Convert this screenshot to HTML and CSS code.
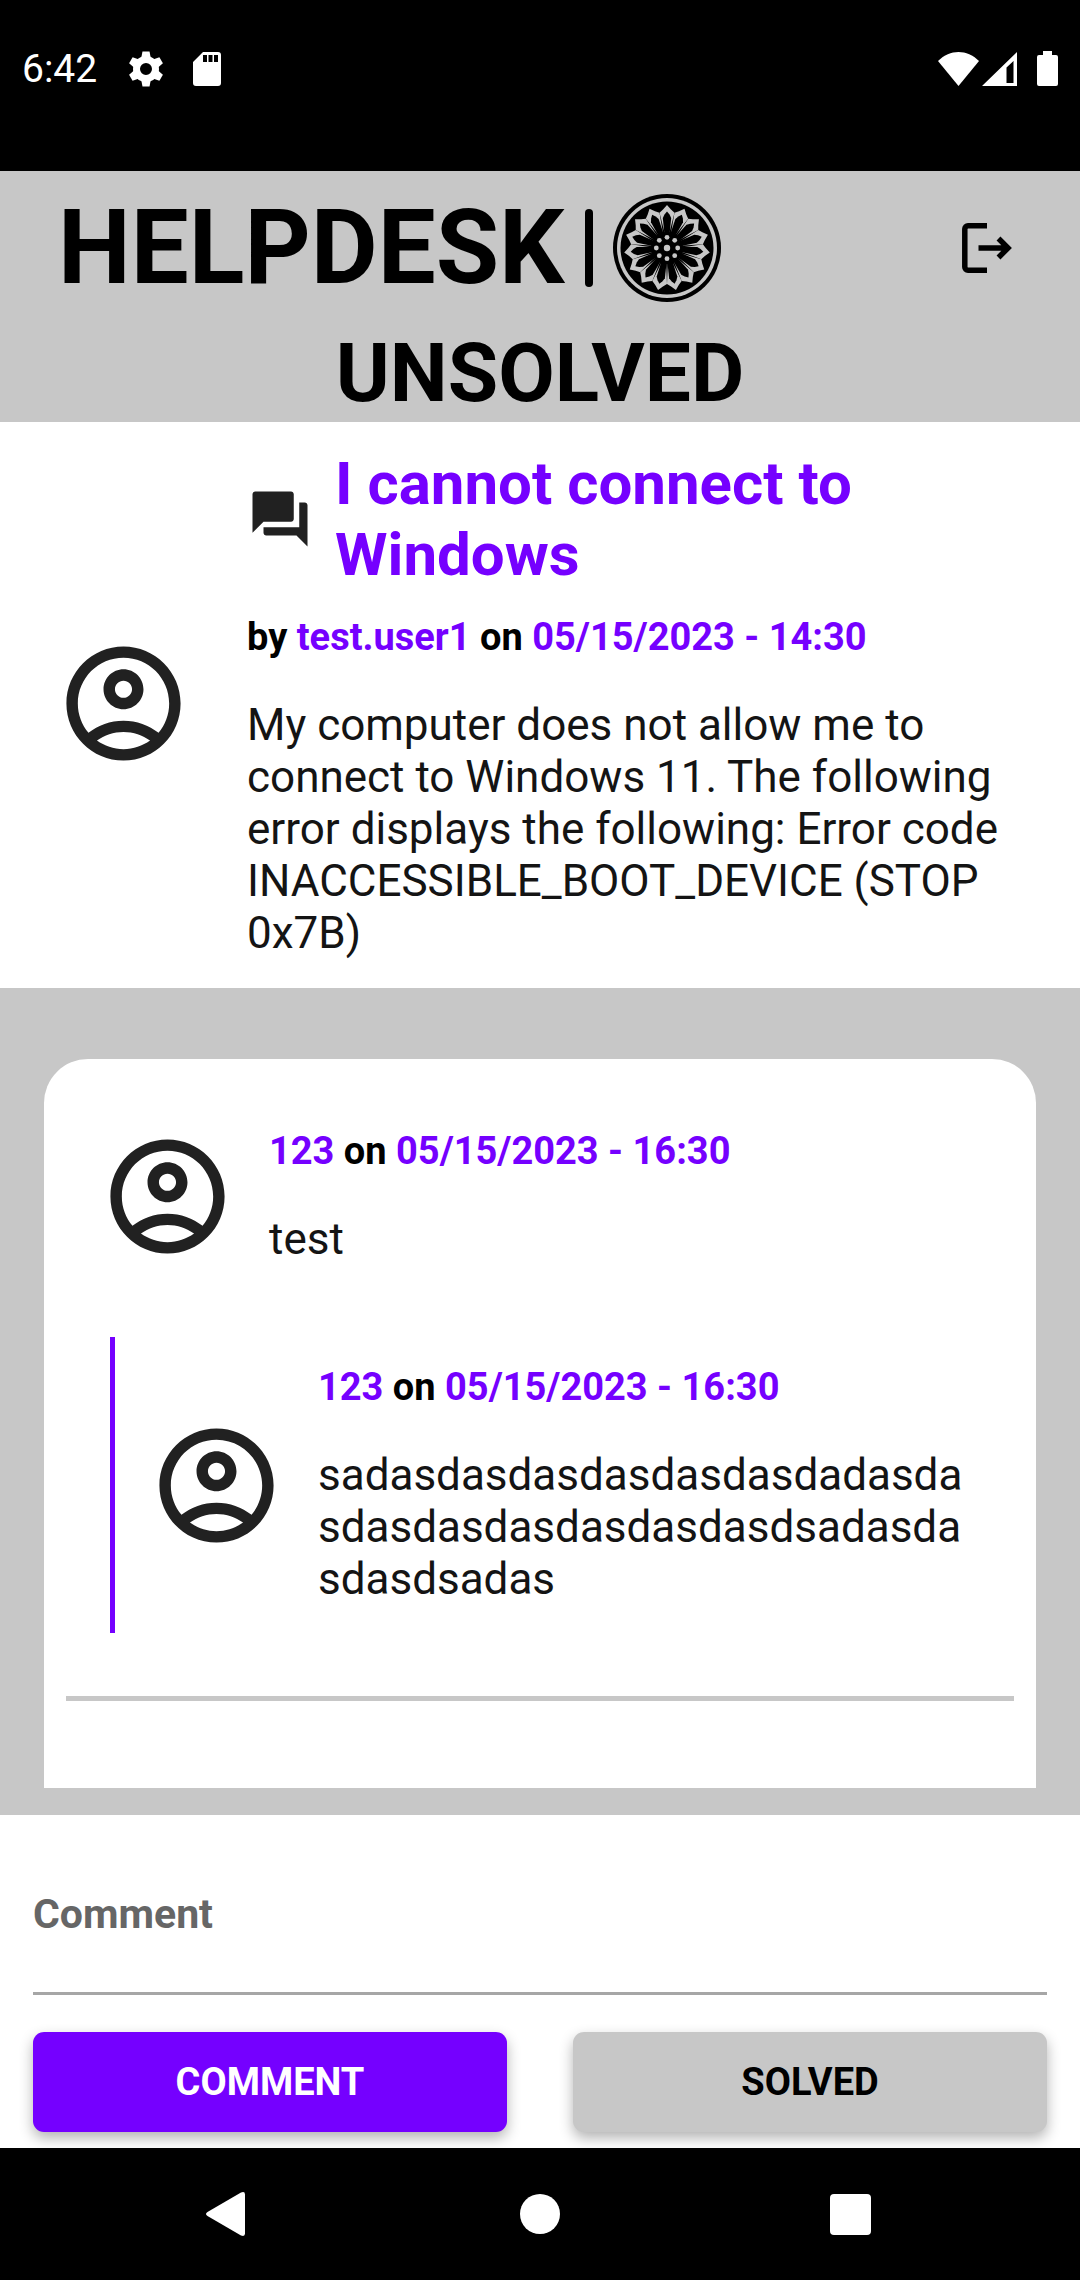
FILE: index.html
```html
<!DOCTYPE html>
<html lang="en">
<head>
  <meta charset="utf-8">
  <meta name="viewport" content="width=device-width, initial-scale=1">
  <title>Helpdesk</title>
  <link rel="stylesheet" href="styles.css">
</head>
<body class="app">
  <svg class="defs" aria-hidden="true">
    <symbol id="account" viewBox="0 0 24 24">
      <path fill-rule="evenodd" d="M12 2C6.480 2 2 6.480 2 12s4.480 10 10 10 10-4.480 10-10S17.520 2 12 2zM7.350 18.500C8.660 17.560 10.260 17 12 17s3.340.560 4.650 1.500C15.340 19.440 13.740 20 12 20s-3.340-.560-4.650-1.500zm10.790-1.380C16.450 15.800 14.320 15 12 15s-4.450.800-6.140 2.120C4.700 15.730 4 13.950 4 12c0-4.420 3.580-8 8-8s8 3.580 8 8c0 1.950-.700 3.730-1.860 5.120z"/>
      <path fill-rule="evenodd" d="M12 6c-1.930 0-3.500 1.570-3.500 3.500S10.070 13 12 13s3.500-1.570 3.500-3.500S13.930 6 12 6zm0 5c-.830 0-1.500-.670-1.500-1.500S11.170 8 12 8s1.500.670 1.500 1.500S12.830 11 12 11z"/>
    </symbol>
    <symbol id="petal" viewBox="-54 -54 108 108">
      <path class="emblem-light" d="M0-43 4-38.500 7.500-35.300 0-6-7.500-35.300-4-38.500z"/>
      <path class="emblem-dark" d="M0-36.500 2.500-33.500 4.200-30 2.500-13H-2.500L-4.200-30-2.500-33.500z"/>
    </symbol>
  </svg>

  <div class="status">
    <span class="clock">6:42</span>
    <svg class="status-icon" viewBox="0 0 42 42" aria-hidden="true">
      <g transform="translate(21 21)">
        <circle r="9.500" fill="none" stroke="currentColor" stroke-width="7"/>
        <path d="M-5-10-3.500-17.500h7L5-10z"/>
        <path d="M-5-10-3.500-17.500h7L5-10z" transform="rotate(60)"/>
        <path d="M-5-10-3.500-17.500h7L5-10z" transform="rotate(120)"/>
        <path d="M-5-10-3.500-17.500h7L5-10z" transform="rotate(180)"/>
        <path d="M-5-10-3.500-17.500h7L5-10z" transform="rotate(240)"/>
        <path d="M-5-10-3.500-17.500h7L5-10z" transform="rotate(300)"/>
      </g>
    </svg>
    <svg class="status-icon" viewBox="0 0 42 42" aria-hidden="true">
      <path fill-rule="evenodd" d="M17 4h15a3 3 0 0 1 3 3v28a3 3 0 0 1-3 3H10a3 3 0 0 1-3-3V14zM17 7v7h4V7zm5.500 0v7h4V7zm5.500 0v7h4V7z"/>
    </svg>
    <svg class="status-signals" viewBox="0 0 122 42" aria-hidden="true">
      <path d="M1 13C13 1 30 1 42 13L21.500 38z"/>
      <path fill-rule="evenodd" d="M45 38 80 4v34zM69.500 35h7V13l-7 6.500z"/>
      <path d="M106 3h9v4h4a2 2 0 0 1 2 2v27a2 2 0 0 1-2 2h-17a2 2 0 0 1-2-2V9a2 2 0 0 1 2-2h4z"/>
    </svg>
  </div>

  <header class="header">
    <div class="brand-row">
      <div class="brand">
        <span class="wordmark">HELPDESK</span>
        <span class="brand-bar"></span>
        <svg class="emblem" viewBox="-54 -54 108 108" aria-hidden="true">
          <circle class="emblem-dark" r="54"/>
          <circle class="emblem-light" r="50"/>
          <circle class="emblem-dark" r="46.500"/>
          <use href="#petal" x="-54" y="-54" width="108" height="108"/>
          <use href="#petal" x="-54" y="-54" width="108" height="108" transform="rotate(24)"/>
          <use href="#petal" x="-54" y="-54" width="108" height="108" transform="rotate(48)"/>
          <use href="#petal" x="-54" y="-54" width="108" height="108" transform="rotate(72)"/>
          <use href="#petal" x="-54" y="-54" width="108" height="108" transform="rotate(96)"/>
          <use href="#petal" x="-54" y="-54" width="108" height="108" transform="rotate(120)"/>
          <use href="#petal" x="-54" y="-54" width="108" height="108" transform="rotate(144)"/>
          <use href="#petal" x="-54" y="-54" width="108" height="108" transform="rotate(168)"/>
          <use href="#petal" x="-54" y="-54" width="108" height="108" transform="rotate(192)"/>
          <use href="#petal" x="-54" y="-54" width="108" height="108" transform="rotate(216)"/>
          <use href="#petal" x="-54" y="-54" width="108" height="108" transform="rotate(240)"/>
          <use href="#petal" x="-54" y="-54" width="108" height="108" transform="rotate(264)"/>
          <use href="#petal" x="-54" y="-54" width="108" height="108" transform="rotate(288)"/>
          <use href="#petal" x="-54" y="-54" width="108" height="108" transform="rotate(312)"/>
          <use href="#petal" x="-54" y="-54" width="108" height="108" transform="rotate(336)"/>
          <circle class="emblem-dark" r="16"/>
          <g class="emblem-light">
            <circle r="3.200"/>
            <circle cy="-10.700" r="2.400"/>
            <circle cy="10.700" r="2.400"/>
            <circle cx="-10.700" r="2.400"/>
            <circle cx="10.700" r="2.400"/>
            <circle cx="-7.700" cy="-7.700" r="2.400"/>
            <circle cx="7.700" cy="-7.700" r="2.400"/>
            <circle cx="-7.700" cy="7.700" r="2.400"/>
            <circle cx="7.700" cy="7.700" r="2.400"/>
          </g>
        </svg>
      </div>
      <button class="icon-button" type="button" aria-label="Log out">
        <svg class="icon" viewBox="0 0 66 66" aria-hidden="true">
          <g fill="none" stroke="currentColor" stroke-width="5.500">
            <path d="M33 10.800H14a3.200 3.200 0 0 0-3.200 3.200v38a3.200 3.200 0 0 0 3.200 3.200h19"/>
            <path d="M24.500 33H54M44.500 23.500 54 33l-9.500 9.500"/>
          </g>
        </svg>
      </button>
    </div>
    <h1 class="state">UNSOLVED</h1>
  </header>

  <article class="post">
    <svg class="avatar" aria-hidden="true"><use href="#account"/></svg>
    <div class="post-content">
      <div class="post-heading">
        <svg class="icon" viewBox="0 0 24 24" aria-hidden="true">
          <path d="M21 6h-2v9H6v2c0 .550.450 1 1 1h11l4 4V7c0-.550-.450-1-1-1zm-4 6V3c0-.550-.450-1-1-1H3c-.550 0-1 .450-1 1v14l4-4h10c.550 0 1-.450 1-1z"/>
        </svg>
        <h2 class="post-title">I cannot connect to Windows</h2>
      </div>
      <p class="byline">by <span class="accent">test.user1</span> on <time class="accent">05/15/2023 - 14:30</time></p>
      <p class="message">My computer does not allow me to connect to Windows 11. The following error displays the following: Error code INACCESSIBLE_BOOT_DEVICE (STOP 0x7B)</p>
    </div>
  </article>

  <main class="thread">
    <section class="card">
      <article class="comment">
        <svg class="avatar" aria-hidden="true"><use href="#account"/></svg>
        <div class="comment-content">
          <p class="byline"><span class="accent">123</span> on <time class="accent">05/15/2023 - 16:30</time></p>
          <p class="message">test</p>
        </div>
      </article>
      <article class="comment reply">
        <svg class="avatar" aria-hidden="true"><use href="#account"/></svg>
        <div class="comment-content">
          <p class="byline"><span class="accent">123</span> on <time class="accent">05/15/2023 - 16:30</time></p>
          <p class="message">sadasdasdasdasdasdasdadasdasdasdasdasdasdasdasdsadasdasdasdsadas</p>
        </div>
      </article>
      <hr class="divider">
    </section>
  </main>

  <form class="composer">
    <input class="field" type="text" placeholder="Comment" aria-label="Comment">
    <div class="actions">
      <button class="button button-primary" type="button">COMMENT</button>
      <button class="button" type="button">SOLVED</button>
    </div>
  </form>

  <nav class="navbar">
    <button class="icon-button" type="button" aria-label="Back">
      <svg class="icon" viewBox="0 0 66 66" aria-hidden="true"><path d="M12.500 31 46 11.500q4-1.500 4 2v39q0 3.500-4 2L12.500 35q-3-2 0-4z"/></svg>
    </button>
    <button class="icon-button" type="button" aria-label="Home">
      <svg class="icon" viewBox="0 0 66 66" aria-hidden="true"><circle cx="33" cy="33" r="20"/></svg>
    </button>
    <button class="icon-button" type="button" aria-label="Recent apps">
      <svg class="icon" viewBox="0 0 66 66" aria-hidden="true"><rect x="11" y="13" width="41" height="41" rx="4"/></svg>
    </button>
  </nav>
</body>
</html>
```
FILE: styles.css
```css
* {
  box-sizing: border-box;
}

.app {
  --accent: #7500ff;
  --grey: #c7c7c7;
  display: flex;
  flex-direction: column;
  min-height: 100vh;
  margin: 0;
  background: #fff;
  color: #000;
  font-family: Roboto, "Liberation Sans", sans-serif;
}

.defs {
  display: none;
}

h1,
h2,
p {
  margin: 0;
}

svg {
  display: block;
  flex: none;
  fill: currentColor;
}

.icon {
  width: 66px;
  height: 66px;
}

.icon-button {
  padding: 0;
  border: 0;
  background: none;
  color: inherit;
}

/* System status bar */
.status {
  display: flex;
  align-items: flex-start;
  gap: 19px;
  padding: 46px 21px 79px 22px;
  background: #000;
  color: #fff;
}

.clock {
  width: 84px;
  font-size: 39px;
  line-height: 46px;
}

.status-icon {
  width: 42px;
  height: 46px;
}

.status-signals {
  width: 122px;
  height: 46px;
  margin-left: auto;
}

/* Header */
.header {
  background: var(--grey);
}

.brand-row {
  display: flex;
  align-items: center;
  justify-content: space-between;
  padding: 23px 60px 23px 58px;
}

.brand {
  display: flex;
  align-items: center;
  gap: 20px;
}

.wordmark {
  font-size: 103px;
  font-weight: 700;
  line-height: 108px;
}

.brand-bar {
  width: 8px;
  height: 78px;
  border-radius: 4px;
  background: #000;
}

.emblem {
  width: 108px;
  height: 108px;
}

.emblem-dark {
  fill: #000;
}

.emblem-light {
  fill: var(--grey);
}

.state {
  font-size: 82px;
  font-weight: 700;
  line-height: 97px;
  text-align: center;
}

/* Ticket */
.post {
  display: flex;
  align-items: center;
  gap: 55px;
  padding: 26px 55px 29px;
}

.avatar {
  width: 137px;
  height: 137px;
  color: #212121;
}

.post-heading {
  display: flex;
  align-items: center;
  gap: 22px;
  margin-bottom: 25px;
}

.post-heading .icon {
  color: #212121;
}

.post-title {
  color: var(--accent);
  font-size: 60px;
  font-weight: 700;
  line-height: 71px;
}

.byline {
  margin-bottom: 39px;
  font-size: 38px;
  font-weight: 700;
  line-height: 45px;
}

.accent {
  color: var(--accent);
}

.message {
  color: #141414;
  font-size: 44px;
  line-height: 52px;
  overflow-wrap: anywhere;
}

/* Comments */
.thread {
  display: flex;
  flex: 1;
  flex-direction: column;
  padding: 71px 44px 27px;
  background: var(--grey);
}

.card {
  flex: 1;
  padding: 69px 22px 84px;
  border-radius: 44px 44px 0 0;
  background: #fff;
}

.comment {
  display: flex;
  align-items: center;
  gap: 33px;
  margin: 0 44px 72px 33px;
}

.reply {
  margin: 0 44px 63px;
  padding: 28px 0 28px 33px;
  border-left: 5px solid var(--accent);
}

.divider {
  height: 5px;
  margin: 0;
  border: 0;
  background: var(--grey);
}

/* Comment form */
.composer {
  padding: 33px 33px 16px;
}

.field {
  display: block;
  width: 100%;
  height: 147px;
  margin-bottom: 37px;
  padding: 42px 0 54px;
  border: 0;
  border-bottom: 3px solid #a6a6a6;
  background: none;
  color: #000;
  font: 700 41px/48px Roboto, "Liberation Sans", sans-serif;
}

.field::placeholder {
  color: #666;
  opacity: 1;
}

.actions {
  display: grid;
  grid-template-columns: 1fr 1fr;
  gap: 66px;
}

.button {
  height: 100px;
  border: 0;
  border-radius: 11px;
  background: var(--grey);
  box-shadow: 0 6px 14px rgba(0, 0, 0, 0.3);
  color: #000;
  font: 700 38px/45px Roboto, "Liberation Sans", sans-serif;
}

.button-primary {
  background: var(--accent);
  color: #fff;
}

/* System navigation bar */
.navbar {
  position: relative;
  display: flex;
  justify-content: center;
  gap: 246px;
  padding: 33px;
  background: #000;
  color: #fff;
}
```
